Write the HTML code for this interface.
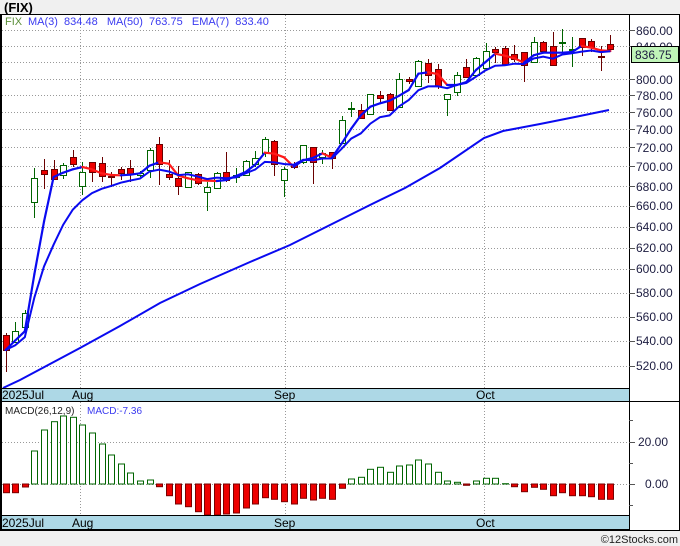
<!DOCTYPE html>
<html><head><meta charset="utf-8"><style>
html,body{margin:0;padding:0;background:#f0f0f0;width:680px;height:546px;overflow:hidden;font-family:"Liberation Sans",sans-serif}
svg{position:absolute;left:0;top:0}
</style></head><body>
<svg id="s" width="680" height="546" xmlns="http://www.w3.org/2000/svg" font-family="Liberation Sans, sans-serif">
<rect x="0" y="14" width="680" height="517" fill="#fff"/>
<g id="grid" stroke="#999" stroke-dasharray="1,2" stroke-width="1"></g>
<rect x="1" y="388" width="628" height="13" fill="#add8e6"/>
<rect x="1" y="515" width="628" height="14" fill="#add8e6"/>
<g id="plot"></g>
<g stroke="#000" stroke-width="1" fill="none">
<rect x="0.5" y="14.5" width="679" height="516"/>
<line x1="629.5" y1="14" x2="629.5" y2="531"/>
<line x1="0" y1="388.5" x2="629" y2="388.5"/>
<line x1="0" y1="401.5" x2="680" y2="401.5"/>
<line x1="0" y1="515.5" x2="629" y2="515.5"/>
<line x1="0" y1="529.5" x2="629" y2="529.5"/>
<line x1="1" y1="14" x2="1" y2="531" stroke-width="2"/>
</g>
<g id="ticks" stroke="#555"></g>
<text x="4" y="12" font-size="13" font-weight="bold" fill="#000">(FIX)</text>
<text x="5" y="25" font-size="11" fill="#5b8f3a">FIX</text>
<text x="28" y="25" font-size="11" fill="#3a3af0" xml:space="preserve">MA(3)  834.48   MA(50)  763.75   EMA(7)  833.40</text>
<g font-size="12" fill="#1c1c40">
<text x="636" y="35">860.00</text><text x="636" y="51">840.00</text>
<text x="636" y="84">800.00</text><text x="636" y="100">780.00</text>
<text x="636" y="117">760.00</text><text x="636" y="134">740.00</text>
<text x="636" y="152">720.00</text><text x="636" y="171">700.00</text>
<text x="636" y="191">680.00</text><text x="636" y="210">660.00</text>
<text x="636" y="231">640.00</text><text x="636" y="252">620.00</text>
<text x="636" y="273">600.00</text><text x="636" y="297">580.00</text>
<text x="636" y="321">560.00</text><text x="636" y="345">540.00</text>
<text x="636" y="370">520.00</text>
<text x="638" y="446">20.00</text><text x="645" y="488">0.00</text>
</g>
<rect x="631.5" y="46.5" width="47" height="16" fill="#c0f5b8" stroke="#000"/>
<text x="635" y="59" font-size="12" fill="#1c1c40">836.75</text>
<g font-size="12" fill="#000">
<text x="2" y="399">2025Jul</text><text x="72" y="399">Aug</text><text x="274" y="399">Sep</text><text x="476" y="399">Oct</text>
<text x="2" y="527">2025Jul</text><text x="72" y="527">Aug</text><text x="274" y="527">Sep</text><text x="476" y="527">Oct</text>
</g>
<text x="5" y="414" font-size="10" fill="#222">MACD(26,12,9)</text>
<text x="87" y="414" font-size="10" fill="#3a3af0">MACD:-7.36</text>
<text x="678" y="543" font-size="11" fill="#222" text-anchor="end">©12Stocks.com</text>
</svg>
<script>
var NS="http://www.w3.org/2000/svg";
function el(p,t,a){var e=document.createElementNS(NS,t);for(var k in a)e.setAttribute(k,a[k]);p.appendChild(e);return e;}
var grid=document.getElementById('grid'),plot=document.getElementById('plot'),ticks=document.getElementById('ticks');
var ys=[30.5,46.5,79.5,95.5,112.5,129.5,147.5,166.5,186.5,206.5,227.5,248.5,269.5,293.5,317.5,341.5,366.5];
ys.forEach(function(y){el(grid,'line',{x1:2,y1:y,x2:629,y2:y});el(ticks,'line',{x1:629,y1:y,x2:635,y2:y});});
el(grid,'line',{x1:2,y1:62.5,x2:629,y2:62.5});
[80.5,285.5,484.5].forEach(function(x){el(grid,'line',{x1:x,y1:15,x2:x,y2:388});el(grid,'line',{x1:x,y1:402,x2:x,y2:515});});
[442.5,484.5].forEach(function(y){el(grid,'line',{x1:2,y1:y,x2:629,y2:y});el(ticks,'line',{x1:629,y1:y,x2:635,y2:y});});
[420.5,463.5,505.5].forEach(function(y){el(ticks,'line',{x1:629,y1:y,x2:633,y2:y});});
var C=[[335,350,333,372,'r'],[331,342,322,342,'g'],[313,327,310,337,'g'],[178,202,168,218,'g'],[170,174,159,189,'r'],[169,179,160,180,'r'],[165,175,163,179,'g'],[157,164,150,167,'r'],[172,186,162,195,'g'],[162,172,162,182,'r'],[163,176,157,182,'r'],[176,177,172,187,'r'],[169,173,167,180,'r'],[168,174,160,182,'r'],[173,175,171,177,'g'],[150,170,148,178,'g'],[144,164,137,185,'r'],[174,177,160,180,'r'],[178,186,166,195,'r'],[172,187,172,188,'g'],[174,183,173,185,'r'],[187,192,182,211,'g'],[173,188,172,188,'g'],[172,180,152,182,'r'],[175,177,168,183,'g'],[161,175,160,176,'g'],[158,164,151,167,'g'],[139,153,137,157,'g'],[141,164,140,176,'r'],[169,180,167,197,'g'],[164,167,162,169,'r'],[145,162,145,164,'g'],[147,162,147,184,'r'],[153,157,150,164,'g'],[152,158,152,169,'r'],[120,143,116,143,'g'],[108,109,102,117,'g'],[110,118,104,119,'r'],[94,114,94,115,'g'],[95,98,91,103,'r'],[94,110,93,111,'r'],[79,107,73,107,'g'],[79,81,77,84,'r'],[61,86,60,87,'g'],[63,75,59,83,'r'],[69,86,64,89,'r'],[94,99,94,116,'g'],[75,92,72,96,'g'],[67,77,59,78,'r'],[58,75,57,76,'g'],[51,68,43,69,'g'],[49,52,47,63,'r'],[48,64,46,64,'r'],[54,59,45,62,'r'],[52,65,52,82,'r'],[42,62,37,63,'g'],[42,51,41,52,'r'],[46,65,32,66,'r'],[42,43,29,52,'g'],[49,50,37,67,'g'],[38,47,38,56,'r'],[41,47,39,52,'r'],[56,57,46,71,'r'],[44,49,35,49,'r']];
var M=[492.7,492.7,487,451,430,421.7,416,417.3,425,433,444,455,464,473,481,480,486.7,495.7,504,506.7,511.7,515,515,514,513,508,504,497.7,499.3,501.7,504,498.3,500,498.3,499.3,488.3,479,477.3,469.3,467.3,472.3,466,465,460,464,472.3,481,482.3,485.3,481,478.3,478.3,483.7,486.7,491.7,487.3,489.3,495.7,492.7,495.7,495.7,496.7,499.3,499.3];
function X(i){return 5.6+9.6*i;}
// MACD
M.forEach(function(v,i){var x=Math.round(X(i))-3;var z=484;
 if(v<z){el(plot,'rect',{x:x+0.5,y:v,width:6,height:z-v,fill:'#fff',stroke:'#006400'});}
 else{el(plot,'rect',{x:x+0.5,y:z,width:6,height:v-z,fill:'#ee0000',stroke:'#7a0000'});}});
// MA50
el(plot,'polyline',{points:'3,388 20,380 50,364 80,348 120,326 160,303 200,284 250,262 290,245 330,225 370,205 405,188 440,168 484,138 503,131 540,124 575,117 609,110',fill:'none',stroke:'#0a0af0','stroke-width':2});
// candles
C.forEach(function(c,i){var x=Math.round(X(i));var g=c[4]=='g';
 el(plot,'line',{x1:x+0.5,y1:c[2],x2:x+0.5,y2:c[3],stroke:g?'#006400':'#6a0000'});
 var h=Math.max(1,c[1]-c[0]);
 el(plot,'rect',{x:x-2.5,y:c[0]+0.5,width:6,height:h,fill:g?'#fff':'#ee0000',stroke:g?'#006400':'#6a0000'});});
// MA3 & EMA7
var cl=C.map(function(c){return c[4]=='g'?c[0]:c[1];});
var ema=[],e=cl[0];cl.forEach(function(v,i){e=i==0?v:e+(v-e)*0.25;ema.push(e);});
var pts=ema.map(function(v,i){return X(i).toFixed(1)+','+v.toFixed(1);}).join(' ');
var ma=cl.map(function(v,i){var a=cl.slice(Math.max(0,i-2),i+1);return a.reduce(function(s,t){return s+t;},0)/a.length;});
for(var i=1;i<ma.length;i++){el(plot,'line',{x1:X(i-1),y1:ma[i-1],x2:X(i),y2:ma[i],stroke:ma[i]>ma[i-1]+0.3?'#ff1a1a':'#0a0af0','stroke-width':2.2,'stroke-linecap':'round'});}
el(plot,'polyline',{points:pts,fill:'none',stroke:'#0a0af0','stroke-width':2});
</script>
</body></html>
